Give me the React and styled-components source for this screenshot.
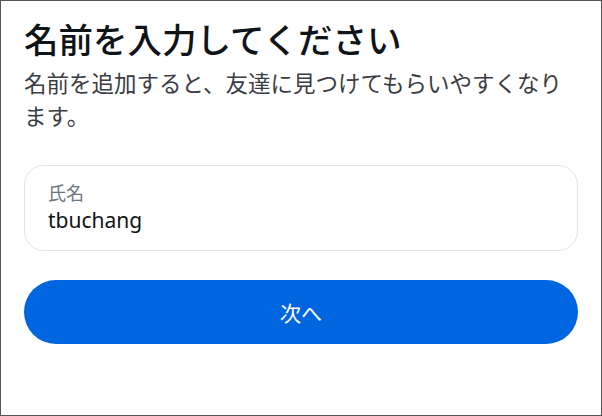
import React from "react";
import styled, { createGlobalStyle } from "styled-components";

const GlobalStyle = createGlobalStyle`
  html, body {
    margin: 0;
    padding: 0;
    background: #ffffff;
  }
  body {
    font-family: "Noto Sans", "Noto Sans CJK JP", sans-serif;
  }
`;

export default function App() {
  return (
    <>
      <GlobalStyle />
      <Frame>
        <Title>名前を入力してください</Title>
        <Subtitle>名前を追加すると、友達に見つけてもらいやすくなります。</Subtitle>
        <Field>
          <Label>氏名</Label>
          <Value>tbuchang</Value>
        </Field>
        <NextButton>次へ</NextButton>
      </Frame>
    </>
  );
}

const Frame = styled.div`
  width: 602px;
  height: 416px;
  box-sizing: border-box;
  border: 1px solid #555555;
  padding: 16px 23px 0;
  display: flex;
  flex-direction: column;
`;

const Title = styled.h1`
  margin: 0;
  font-size: 34.5px;
  line-height: 46px;
  font-weight: 500;
  color: #0f1419;
`;

const Subtitle = styled.p`
  margin: 4px 0 0;
  font-size: 22.5px;
  line-height: 33px;
  font-weight: 400;
  color: #3a3d42;
`;

const Field = styled.div`
  margin-top: 32px;
  height: 86px;
  box-sizing: border-box;
  border: 1px solid #dfe3ea;
  border-radius: 20px;
  padding: 14px 23px 0;
  display: flex;
  flex-direction: column;
`;

const Label = styled.span`
  font-size: 18px;
  line-height: 26px;
  color: #6b7583;
`;

const Value = styled.span`
  font-size: 21px;
  line-height: 28px;
  color: #111418;
`;

const NextButton = styled.button`
  margin-top: 29px;
  height: 64px;
  border: none;
  border-radius: 32px;
  background: #0066e0;
  color: #ffffff;
  font-family: "Noto Sans", "Noto Sans CJK JP", sans-serif;
  font-size: 21px;
  font-weight: 400;
`;
